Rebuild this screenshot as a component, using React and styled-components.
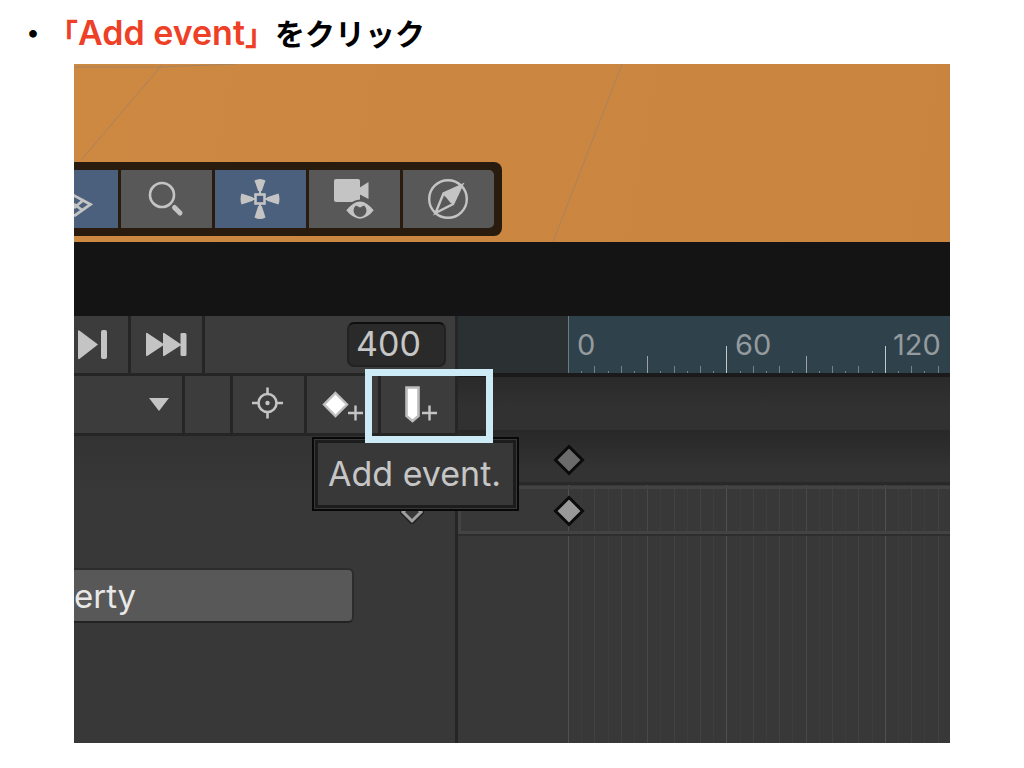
import styled, { createGlobalStyle } from 'styled-components';

const FRAME_WIDTH = 2.64;
const ORIGIN = 110;

const frames = Array.from({ length: 120 }, (_, i) => i * 5);

const frameToX = (frame) => ORIGIN + frame * FRAME_WIDTH;

const tickHeight = (frame) => {
  if (frame === 0) return 57;
  if (frame % 60 === 0) return 27;
  if (frame % 30 === 0) return 17;
  if (frame % 10 === 0) return 7;
  return 2;
};

const tickColor = (frame) => {
  if (frame === 0) return '#6d7a80';
  if (frame % 60 === 0) return '#c3c8ca';
  if (frame % 30 === 0) return '#99a2a6';
  return '#74828a';
};

const gridColor = (frame) => {
  if (frame % 60 === 0) return '#505050';
  if (frame % 30 === 0) return '#484848';
  if (frame % 10 === 0) return '#424242';
  return '#3d3d3d';
};

const GridIcon = () => (
  <svg width="44" height="58" viewBox="74 170 44 58" fill="none">
    <path
      d="M60 205L74 195.500L90.500 204.500L74 216M74 204L82 210M74 208L84 199.500"
      stroke="#c4c4c4"
      strokeWidth="2.800"
    />
  </svg>
);

const SearchIcon = () => (
  <svg width="91" height="58" viewBox="121 170 91 58" fill="none">
    <circle cx="162" cy="195" r="12" stroke="#c4c4c4" strokeWidth="2.600" />
    <path
      d="M174.500 207.500L180 213"
      stroke="#c4c4c4"
      strokeWidth="5"
      strokeLinecap="round"
    />
  </svg>
);

const GizmoIcon = () => (
  <svg width="91" height="58" viewBox="215 170 91 58" fill="#c4c4c4">
    <path d="M254.500 180.500Q260 177.500 265.500 180.500L261.800 191H258.200Z" />
    <path d="M254.500 217.500Q260 220.500 265.500 217.500L261.800 206H258.200Z" />
    <path d="M241.500 193.500Q239.500 199 241.500 204.500L253 200.800V197.200Z" />
    <path d="M278.500 193.500Q280.500 199 278.500 204.500L267 200.800V197.200Z" />
    <path d="M259 190H261V194H259ZM259 204H261V208H259ZM252 198H256V200H252ZM264 198H268V200H264Z" />
    <rect
      x="255.500"
      y="194.500"
      width="9"
      height="9"
      fill="#46597a"
      stroke="#c4c4c4"
      strokeWidth="2.600"
    />
  </svg>
);

const CameraIcon = () => (
  <svg width="91" height="58" viewBox="309 170 91 58" fill="#c4c4c4">
    <rect x="334" y="179" width="26" height="23" rx="2" />
    <path d="M359 188L368.500 182V199L359 194Z" />
    <path
      d="M345 210.500Q360 190.500 375 210.500Q360 229 345 210.500Z"
      stroke="#585858"
      strokeWidth="2"
    />
    <circle cx="360" cy="210.500" r="6.500" fill="#585858" />
    <path d="M356 203H364V205.500L360 207.500L356 205.500Z" />
  </svg>
);

const CompassIcon = () => (
  <svg width="91" height="58" viewBox="403 170 91 58" fill="none">
    <circle cx="448" cy="199" r="18.800" stroke="#c4c4c4" strokeWidth="2.400" />
    <path
      d="M462 185L443.500 193.500L435.500 213L453 204Z"
      stroke="#c4c4c4"
      strokeWidth="2.400"
    />
    <path d="M462 185L443.500 193.500L446 201L453 204Z" fill="#c4c4c4" />
    <path d="M444.500 195.500L445.500 201.500L451 203.500Z" fill="#585858" />
  </svg>
);

const NextKeyIcon = () => (
  <svg width="54" height="57" viewBox="74 316 54 57" fill="#c4c4c4">
    <path d="M78 331Q78 329.500 80 331L98 344.500L80 358.500Q78 360 78 358Z" />
    <rect x="101" y="330" width="6" height="29" rx="2" />
  </svg>
);

const LastKeyIcon = () => (
  <svg width="71" height="57" viewBox="131 316 71 57" fill="#c4c4c4">
    <path d="M146 334Q146 332 148 333.500L163 343.500V334Q163 332 165 333.500L180.500 344V334Q180.500 333 182 333H185Q186.500 333 186.500 334.500V354.500Q186.500 356 185 356H182Q180.500 356 180.500 354.500V345.500L165 355.500Q163 357 163 355V345.500L148 355.500Q146 357 146 355Z" />
  </svg>
);

const TargetIcon = () => (
  <svg width="71" height="57" viewBox="233 376 71 57" fill="none">
    <circle cx="267.500" cy="403" r="9" stroke="#c4c4c4" strokeWidth="2.600" />
    <circle cx="267.500" cy="403" r="2.200" fill="#c4c4c4" />
    <path
      d="M252 403H259M276 403H283M267.500 387.500V394M267.500 412V418.500"
      stroke="#c4c4c4"
      strokeWidth="2.600"
    />
  </svg>
);

const AddKeyIcon = () => (
  <svg width="71" height="57" viewBox="307 376 71 57">
    <path
      d="M335.500 393L347 404.500L335.500 416L324 404.500Z"
      fill="#fff"
      stroke="#c0c0c0"
      strokeWidth="2.400"
    />
    <path d="M348 413H363M355.500 405.500V420.500" stroke="#c4c4c4" strokeWidth="2.400" />
  </svg>
);

const AddEventIcon = () => (
  <svg width="74" height="57" viewBox="381 376 74 57">
    <path
      d="M406.500 387.500H418.500V416L412.500 421L406.500 416Z"
      fill="#fff"
      stroke="#bcbcbc"
      strokeWidth="2.600"
    />
    <path d="M422 413H437M429.500 405.500V420.500" stroke="#c4c4c4" strokeWidth="2.400" />
  </svg>
);

const Keyframe = ({ color }) => (
  <svg width="32" height="32" viewBox="0 0 32 32">
    <path
      d="M16 2.500L29.500 16L16 29.500L2.500 16Z"
      fill={color}
      stroke="#0b0b0b"
      strokeWidth="3"
    />
  </svg>
);

const App = () => (
  <Page>
    <GlobalStyle />
    <Title>
      ・<Accent>「<Latin>Add event</Latin>」</Accent>をクリック
    </Title>
    <Editor>
      <Scene>
        <SceneLines aria-hidden="true">
          <path d="M0 3L86 3L163 0M88 1L8 95M548 0L479 178" />
        </SceneLines>
        <Toolbar>
          <Tool $narrow $active aria-label="Grid">
            <GridIcon />
          </Tool>
          <Tool aria-label="Search">
            <SearchIcon />
          </Tool>
          <Tool $active aria-label="Gizmos">
            <GizmoIcon />
          </Tool>
          <Tool aria-label="Camera visibility">
            <CameraIcon />
          </Tool>
          <Tool aria-label="Orientation">
            <CompassIcon />
          </Tool>
        </Toolbar>
      </Scene>
      <Divider />
      <Animation>
        <Side>
          <Row>
            <Cell $width={54} aria-label="Next keyframe">
              <NextKeyIcon />
            </Cell>
            <Cell $width={71} aria-label="Last keyframe">
              <LastKeyIcon />
            </Cell>
            <FrameField>
              <FrameInput aria-label="Current frame" defaultValue="400" />
            </FrameField>
          </Row>
          <Row>
            <ClipField>
              <ClipSelect aria-label="Clip">
                <option value="" />
              </ClipSelect>
              <Caret width="20" height="13" viewBox="0 0 20 13">
                <path d="M0 0H20L10 13Z" fill="#c4c4c4" />
              </Caret>
            </ClipField>
            <Spacer />
            <Cell $width={71} aria-label="Filter by selection">
              <TargetIcon />
            </Cell>
            <Cell $width={71} aria-label="Add keyframe">
              <AddKeyIcon />
            </Cell>
            <EventCell>
              <Cell $width={74} $last aria-label="Add event">
                <AddEventIcon />
              </Cell>
              <Tooltip role="tooltip">Add event.</Tooltip>
              <Highlight />
            </EventCell>
          </Row>
          <Properties>
            <PropertyRow>
              <svg width="24" height="24" viewBox="0 0 24 24">
                <path
                  d="M12 3L21 12L12 21L3 12Z"
                  fill="#383838"
                  stroke="#222"
                  strokeWidth="6"
                />
                <path
                  d="M12 3L21 12L12 21L3 12Z"
                  fill="#383838"
                  stroke="#a0a0a0"
                  strokeWidth="3"
                />
              </svg>
            </PropertyRow>
            <PropertyButton>erty</PropertyButton>
          </Properties>
        </Side>
        <Timeline>
          <Ruler>
            <Ticks aria-hidden="true">
              {frames.map((frame) => (
                <rect
                  key={frame}
                  x={Math.round(frameToX(frame))}
                  y={57 - tickHeight(frame)}
                  width="1"
                  height={tickHeight(frame)}
                  fill={tickColor(frame)}
                />
              ))}
            </Ticks>
            <Labels>
              <Label>0</Label>
              <Label>60</Label>
              <Label>120</Label>
            </Labels>
          </Ruler>
          <EventTrack />
          <Sheet>
            <GridLines aria-hidden="true">
              {frames.map((frame) => (
                <rect
                  key={frame}
                  x={Math.round(frameToX(frame))}
                  y="54"
                  width="1"
                  height="100%"
                  fill={gridColor(frame)}
                />
              ))}
            </GridLines>
            <Tracks>
              <SummaryTrack>
                <Keyframe color="#6b6b6b" />
              </SummaryTrack>
              <Track>
                <Keyframe color="#999" />
              </Track>
            </Tracks>
          </Sheet>
        </Timeline>
      </Animation>
    </Editor>
  </Page>
);
export default App;

const GlobalStyle = createGlobalStyle`
  * {
    box-sizing: border-box;
  }
  body {
    margin: 0;
    background: #fff;
  }
  button, input, select {
    margin: 0;
    padding: 0;
    border: 0;
    border-radius: 0;
    font-family: 'Inter', sans-serif;
  }
  svg {
    display: block;
    flex-shrink: 0;
  }
`;
const Page = styled.main`
  min-height: 100vh;
  display: flex;
  flex-direction: column;
  padding-bottom: 25px;
  font-family: 'Inter', sans-serif;
`;
const Title = styled.h1`
  margin: 0;
  padding: 2px 18px 0;
  height: 64px;
  font-family: 'Noto Sans CJK JP', sans-serif;
  font-size: 30px;
  font-weight: 700;
  line-height: 60px;
  text-spacing-trim: space-all;
  color: #000;
`;
const Accent = styled.span`
  color: #ee4026;
`;
const Latin = styled.span`
  font-family: 'Inter', sans-serif;
  font-size: 34px;
  font-weight: 600;
  line-height: 1;
`;
const Editor = styled.section`
  flex: 1;
  display: flex;
  flex-direction: column;
  margin: 0 74px;
  overflow: hidden;
  background: #383838;
`;
const Scene = styled.div`
  display: grid;
  height: 178px;
  background: linear-gradient(100deg, #cd8842, #c98540);
  > * {
    grid-area: 1 / 1;
  }
`;
const SceneLines = styled.svg`
  width: 100%;
  height: 100%;
  fill: none;
  stroke: #a8835f;
  stroke-width: 1;
`;
const Toolbar = styled.div`
  align-self: end;
  justify-self: start;
  display: flex;
  gap: 3px;
  margin-bottom: 6px;
  padding: 8px 8px 8px 0;
  border-radius: 0 8px 8px 0;
  background: #291b0e;
`;
const Tool = styled.button`
  width: ${({ $narrow }) => ($narrow ? 44 : 91)}px;
  height: 58px;
  background: ${({ $active }) => ($active ? '#4b607c' : '#585858')};
  &:last-child {
    border-radius: 0 5px 5px 0;
  }
`;
const Divider = styled.div`
  height: 74px;
  background: #141414;
`;
const Animation = styled.div`
  flex: 1;
  display: flex;
`;
const Side = styled.div`
  flex: 0 0 384px;
  display: flex;
  flex-direction: column;
  border-right: 3px solid #252525;
`;
const Row = styled.div`
  display: flex;
  height: 60px;
  border-bottom: 3px solid #252525;
  background: #3c3c3c;
`;
const Cell = styled.button`
  flex: none;
  box-sizing: content-box;
  width: ${({ $width }) => $width}px;
  height: 57px;
  border-right: ${({ $last }) => ($last ? '0' : '3px solid #252525')};
  background: #3c3c3c;
`;
const FrameField = styled.div`
  flex: 1;
  display: flex;
  justify-content: flex-end;
  align-items: center;
  padding-right: 9px;
`;
const FrameInput = styled.input`
  width: 99px;
  height: 45px;
  padding: 0 0 2px 7px;
  border: 2px solid #222;
  border-top-color: #0e0e0e;
  border-radius: 7px;
  background: #2a2a2a;
  color: #c6c6c6;
  font-size: 34px;
`;
const ClipField = styled.div`
  display: grid;
  grid-template-columns: 108px;
  border-right: 3px solid #252525;
  > * {
    grid-area: 1 / 1;
  }
`;
const ClipSelect = styled.select`
  appearance: none;
  width: 100%;
  background: #3c3c3c;
`;
const Caret = styled.svg`
  align-self: center;
  justify-self: end;
  margin-right: 13px;
  pointer-events: none;
`;
const Spacer = styled.div`
  width: 48px;
  border-right: 3px solid #252525;
`;
const EventCell = styled.div`
  position: relative;
  flex: 1;
`;
const Highlight = styled.div`
  position: absolute;
  z-index: 2;
  top: -7px;
  left: -16px;
  width: 128px;
  height: 74px;
  border: 7px solid #cdeaf7;
  pointer-events: none;
`;
const Tooltip = styled.div`
  position: absolute;
  z-index: 1;
  top: 61px;
  left: -69px;
  width: 207px;
  height: 74px;
  padding-left: 14px;
  border: 2px solid #080808;
  outline: 1px solid #383838;
  outline-offset: -3px;
  box-shadow: inset 0 0 0 4px #1c1c1c;
  background: #383838;
  color: #c6c6c6;
  font-size: 34px;
  line-height: 70px;
  white-space: nowrap;
`;
const Properties = styled.div`
  flex: 1;
  display: flex;
  flex-direction: column;
  align-items: flex-start;
  background: linear-gradient(#333, #383838 60px);
`;
const PropertyRow = styled.div`
  align-self: stretch;
  display: flex;
  justify-content: flex-end;
  height: 132px;
  padding: 64px 31px 0 0;
`;
const PropertyButton = styled.button`
  width: 280px;
  height: 55px;
  border: 2px solid #2c2c2c;
  border-left: 0;
  border-bottom-color: #222;
  border-radius: 0 6px 6px 0;
  background: #585858;
  color: #e8e8e8;
  font-size: 33px;
  text-align: left;
`;
const Timeline = styled.div`
  flex: 1;
  min-width: 0;
  display: flex;
  flex-direction: column;
`;
const Ruler = styled.div`
  display: grid;
  height: 61px;
  border-bottom: 4px solid #1a1a1a;
  background: linear-gradient(to right, #2b3033 110px, #2f414b 110px);
  > * {
    grid-area: 1 / 1;
    min-width: 0;
  }
`;
const Ticks = styled.svg`
  width: 100%;
  height: 57px;
`;
const Labels = styled.div`
  display: flex;
  padding-left: 110px;
  overflow: hidden;
`;
const Label = styled.span`
  flex: 0 0 158px;
  padding-left: 9px;
  color: #949b9e;
  font-size: 29px;
  line-height: 58px;
`;
const EventTrack = styled.div`
  height: 53px;
  background: linear-gradient(#2a2a2a, #313131 30px);
`;
const Sheet = styled.div`
  flex: 1;
  display: grid;
  background: #383838;
  > * {
    grid-area: 1 / 1;
    min-width: 0;
  }
`;
const GridLines = styled.svg`
  width: 100%;
  height: 100%;
`;
const Tracks = styled.div`
  display: flex;
  flex-direction: column;
`;
const SummaryTrack = styled.div`
  display: flex;
  align-items: center;
  height: 55px;
  padding: 7px 0 0 95px;
  border-bottom: 3px solid #292929;
  background: linear-gradient(#282828, #333 40px);
`;
const Track = styled.div`
  display: flex;
  align-items: center;
  height: 48px;
  margin-top: 1px;
  padding: 2px 0 0 92px;
  border: 3px solid #434343;
  border-right: 0;
  box-shadow: 0 2px 0 #2e2e2e;
`;
